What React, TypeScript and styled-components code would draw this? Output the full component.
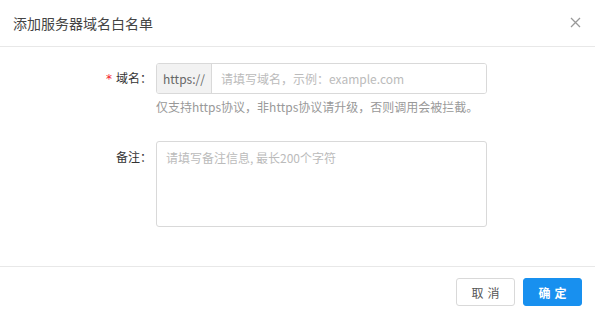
import React from "react";
import styled, { createGlobalStyle } from "styled-components";

const Global = createGlobalStyle`
  html, body { margin: 0; padding: 0; background: #fff; }
  body { font-family: "Noto Sans CJK SC", "Noto Sans", sans-serif; }
  * { box-sizing: border-box; }
`;

const Modal = styled.div`
  width: 595px;
  height: 313px;
  display: flex;
  flex-direction: column;
  background: #fff;
`;

const Header = styled.div`
  height: 47px;
  padding: 0 13px 1px 13px;
  display: flex;
  align-items: center;
  justify-content: space-between;
  border-bottom: 1px solid #e8e8e8;
`;

const Title = styled.div`
  font-size: 14px;
  color: #444;
  line-height: 20px;
`;

const Close = styled.button`
  border: 0;
  background: none;
  padding: 0;
  width: 12px;
  height: 12px;
  margin-right: 1px;
  display: flex;
  align-items: center;
  justify-content: center;
  cursor: pointer;
`;

const Body = styled.div`
  flex: 1;
  padding: 16px 0 0 0;
  display: flex;
  flex-direction: column;
  gap: 25px;
`;

const Row = styled.div`
  display: grid;
  grid-template-columns: 152px 331px;
  column-gap: 4px;
  align-items: start;
`;

const Label = styled.label<{ $top: number }>`
  font-size: 12px;
  color: #333;
  text-align: right;
  line-height: 18px;
  padding-top: ${(p) => p.$top}px;
`;

const Star = styled.span`
  color: #f5222d;
  margin-right: 4px;
  font-family: "DejaVu Sans", sans-serif;
  font-size: 12px;
`;

const Control = styled.div`
  display: flex;
  flex-direction: column;
`;

const Group = styled.div`
  display: flex;
  height: 31px;
  border: 1px solid #d9d9d9;
  border-radius: 3px;
  overflow: hidden;
`;

const Addon = styled.div`
  width: 55px;
  background: #f2f2f2;
  border-right: 1px solid #d9d9d9;
  display: flex;
  align-items: center;
  justify-content: center;
  font-size: 12px;
  color: #666;
`;

const Input = styled.input`
  flex: 1;
  border: 0;
  outline: none;
  padding: 0 9px;
  font-size: 12px;
  font-family: inherit;
  color: #333;
  &::placeholder { color: #bbb; }
`;

const Help = styled.div`
  margin-top: 4px;
  font-size: 12px;
  line-height: 18px;
  color: #999;
`;

const TextArea = styled.textarea`
  width: 331px;
  height: 86px;
  border: 1px solid #d9d9d9;
  border-radius: 3px;
  padding: 7px 9px;
  resize: none;
  outline: none;
  font-size: 12px;
  font-family: inherit;
  line-height: 18px;
  &::placeholder { color: #bbb; }
`;

const Footer = styled.div`
  height: 47px;
  border-top: 1px solid #e8e8e8;
  display: flex;
  justify-content: flex-end;
  align-items: flex-start;
  gap: 8px;
  padding: 11px 13px 0 0;
`;

const Button = styled.button<{ $primary?: boolean }>`
  width: 59px;
  height: 28px;
  border-radius: 3px;
  font-size: 12px;
  font-family: inherit;
  letter-spacing: 4px;
  padding: 0 0 0 4px;
  cursor: pointer;
  border: 1px solid ${(p) => (p.$primary ? "#1890ef" : "#d9d9d9")};
  background: ${(p) => (p.$primary ? "#1890ef" : "#fff")};
  color: ${(p) => (p.$primary ? "#fff" : "#555")};
  font-weight: ${(p) => (p.$primary ? 700 : 400)};
`;

export default function App() {
  return (
    <>
      <Global />
      <Modal>
        <Header>
          <Title>添加服务器域名白名单</Title>
          <Close aria-label="关闭">
            <svg width="11" height="11" viewBox="0 0 11 11">
              <path d="M1 1L10 10M10 1L1 10" stroke="#999" strokeWidth="1.3" />
            </svg>
          </Close>
        </Header>
        <Body>
          <Row>
            <Label $top={6}>
              <Star>*</Star>域名：
            </Label>
            <Control>
              <Group>
                <Addon>https://</Addon>
                <Input placeholder="请填写域名，示例：example.com" />
              </Group>
              <Help>仅支持https协议，非https协议请升级，否则调用会被拦截。</Help>
            </Control>
          </Row>
          <Row>
            <Label $top={7}>备注：</Label>
            <TextArea placeholder="请填写备注信息, 最长200个字符" />
          </Row>
        </Body>
        <Footer>
          <Button>取消</Button>
          <Button $primary>确定</Button>
        </Footer>
      </Modal>
    </>
  );
}
